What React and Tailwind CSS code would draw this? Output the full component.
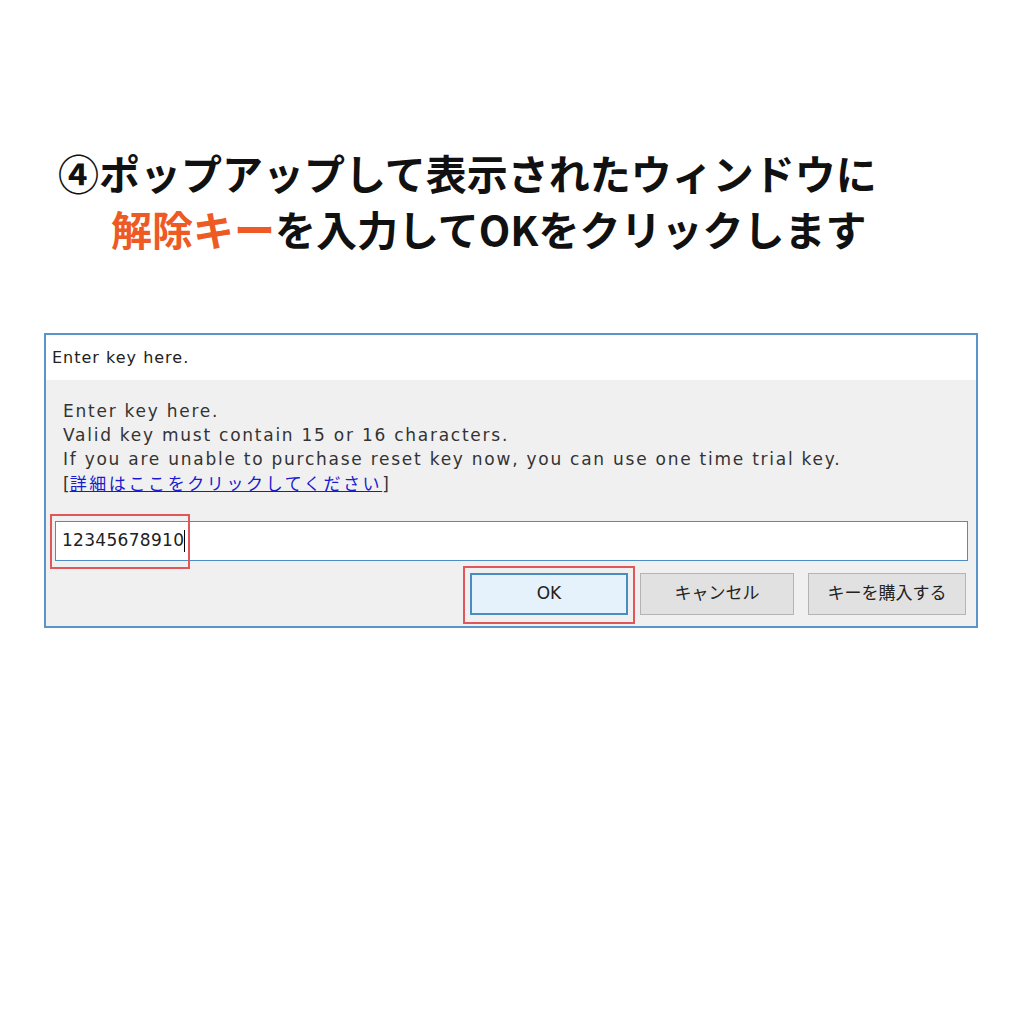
import React from "react";

const headingFont = { fontFamily: '"Noto Sans CJK JP", "Noto Sans", sans-serif' };
const dialogFont = { fontFamily: '"DejaVu Sans", "Noto Sans CJK JP", sans-serif' };

const Button = ({ label, primary, width }) => (
  <div
    className={
      "h-[42px] flex items-center justify-center text-[17px] text-[#222] " +
      width +
      (primary
        ? " bg-[#e5f1fb] border-2 border-[#4a8cc0]"
        : " bg-[#e1e1e1] border border-[#b4b4b4]")
    }
  >
    {label}
  </div>
);

const App = () => {
  return (
    <div className="w-[1024px] h-[1024px] bg-white overflow-hidden">
      <div className="pt-[144px] pl-[58px] font-bold text-[41px] leading-[56px] text-[#111]" style={headingFont}>
        <div>④ポップアップして表示されたウィンドウに</div>
        <div className="pl-[53px]">
          <span className="text-[#ee5a24]">解除キー</span>を入力してOKをクリックします
        </div>
      </div>

      <div className="mt-[77px] ml-[44px] w-[934px] h-[295px] border-2 border-[#5a95c9] bg-[#f0f0f0] flex flex-col" style={dialogFont}>
        <div className="h-[45px] bg-white flex items-center pl-[6px] text-[16px] tracking-[1px] text-[#222]">
          Enter key here.
        </div>

        <div className="pt-[19px] pl-[17px] text-[17px] leading-[24px] tracking-[1.75px] text-[#333]">
          <div>Enter key here.</div>
          <div>Valid key must contain 15 or 16 characters.</div>
          <div>If you are unable to purchase reset key now, you can use one time trial key.</div>
          <div className="tracking-normal">
            [<span className="text-[#1a1ad0] underline tracking-[2.6px]" style={{ fontFamily: '"Noto Sans CJK JP", sans-serif' }}>詳細はここをクリックしてください</span>]
          </div>
        </div>

        <div className="relative mt-[25px] ml-[9px] mr-[8px] h-[40px] bg-white border-[1.5px] border-[#4f8cc4] flex items-center pl-[6px] text-[17px] tracking-[0.3px] text-[#222]">
          <span>12345678910</span>
          <span className="w-[1px] h-[22px] bg-black"></span>
          <div className="absolute left-[-6px] top-[-8px] w-[140px] h-[55px] border-2 border-[#e0565b]"></div>
        </div>

        <div className="mt-[12px] flex justify-end gap-[12px] pr-[10px]">
          <div className="relative">
            <Button label="OK" primary width="w-[158px]" />
            <div className="absolute left-[-7px] top-[-7px] w-[172px] h-[58px] border-2 border-[#e0565b]"></div>
          </div>
          <Button label="キャンセル" width="w-[154px]" />
          <div className="ml-[2px]">
            <Button label="キーを購入する" width="w-[158px]" />
          </div>
        </div>
      </div>
    </div>
  );
};

export default App;
